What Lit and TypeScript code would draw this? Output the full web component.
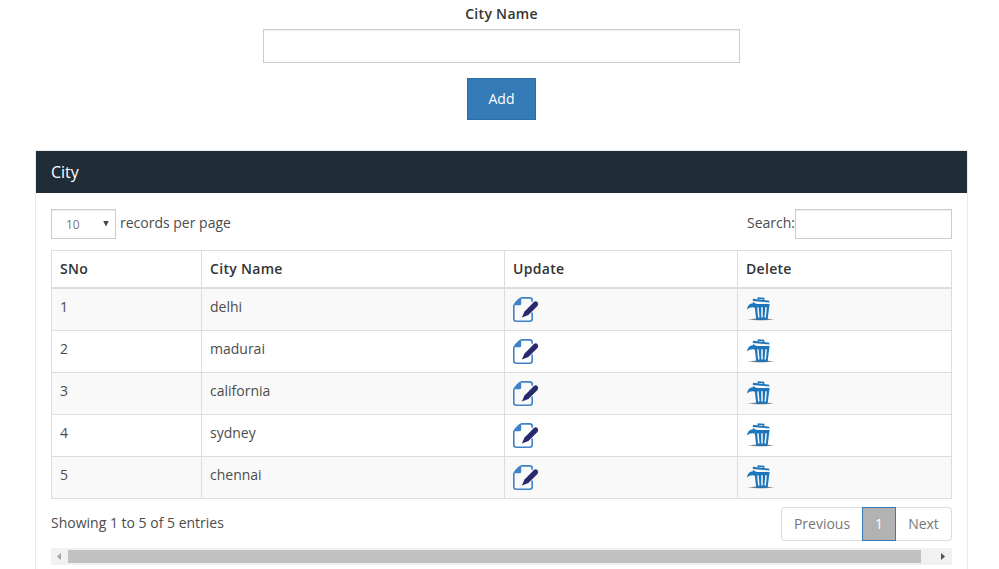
import { LitElement, html, css, svg } from "lit";
import { customElement, property } from "lit/decorators.js";

const editIcon = html`<svg width="26" height="25" viewBox="0 0 26 25">
  ${svg`<path d="M8 .9H16.8Q19.2 .9 19.2 3.3V4.7M19.2 15.5V21.8Q19.2 24.2 16.8 24.2H3.2Q.8 24.2 .8 21.8V8" fill="none" stroke="#3f83c6" stroke-width="1.6"/>
  <path d="M.2 8.3Q.6 6.6 3.6 3.5Q6.2 .7 8.2 .2V6.4Q8.2 8.3 6.2 8.3Z" fill="#3f83c6"/>
  <path d="M8.8 20.4L11.5 14.6L20.7 5.3Q22.5 3.6 24.4 5Q26 6.9 24.5 9L15.4 18L10.2 19.9Z" fill="#292a6e"/>`}
</svg>`;

const trashIcon = html`<svg width="28" height="25" viewBox="0 0 28 25">
  ${svg`<defs><radialGradient id="shade"><stop offset="0" stop-color="#555"/><stop offset=".6" stop-color="#888"/><stop offset="1" stop-color="#aaa" stop-opacity="0"/></radialGradient></defs>
  <ellipse cx="14" cy="22.4" rx="14" ry="1.4" fill="url(#shade)"/>
  <path d="M7.5 7H22.6L20.6 22.7H9.2Z" fill="#1d76bb"/>
  <path d="M10.9 10.2L11.8 20.5M15 10.2V20.5M19.1 10.2L18.2 20.5" stroke="#f9f9f9" stroke-width="1.5"/>
  <path d="M6 1.8L22.3 3.7V5.6L5.8 3.9Z" fill="#1d76bb"/>
  <path d="M11.1 2.5L11.4 1L16.6 1.4V3.2" fill="none" stroke="#1d76bb" stroke-width="1.5"/>
  <path d="M0 12.4Q.6 6.8 6 6.2L5.8 4.9L12 8.2L8.4 12.8L7.5 10.5Q3 9.6 0 12.4Z" fill="#1d76bb"/>`}
</svg>`;

@customElement("city-table")
class CityTable extends LitElement {
  @property({ attribute: false }) cities: string[] = [];

  static styles = css`
    :host { display: block; }
    .table { border: 1px solid #ddd; border-width: 1px 0 0 1px; }
    .row { display: grid; grid-template-columns: 150px 303px 233px 214px; height: 42px; }
    .row:nth-child(even) { background: #f9f9f9; }
    .head { height: 38px; font-weight: 600; letter-spacing: 0.3px; color: #333; }
    .cell { border: 1px solid #ddd; border-width: 0 1px 1px 0; padding: 8px; line-height: 20px; box-sizing: border-box; }
    .head .cell { border-bottom-width: 2px; }
    svg { display: block; }
    .trash { padding-left: 9px; }
  `;

  render() {
    return html`<div class="table">
      <div class="row head">
        ${["SNo", "City Name", "Update", "Delete"].map((t) => html`<div class="cell">${t}</div>`)}
      </div>
      ${this.cities.map((c, i) => html`<div class="row">
        <div class="cell">${i + 1}</div>
        <div class="cell">${c}</div>
        <div class="cell">${editIcon}</div>
        <div class="cell trash">${trashIcon}</div>
      </div>`)}
    </div>`;
  }
}

@customElement("app-root")
class AppRoot extends LitElement {
  static styles = css`
    :host { display: block; height: 569px; overflow: hidden; background: #fff; color: #4c4c4c; font: 14px/20px "Open Sans", sans-serif; }
    input { display: block; box-sizing: border-box; margin: 0; border: 1px solid #ccc; border-radius: 0; background: #fff; box-shadow: inset 0 1px 1px rgba(0, 0, 0, 0.075); outline: 0; }
    .form { display: flex; flex-direction: column; align-items: center; padding: 4px 0 0 4px; height: 146px; }
    .label { font-weight: 600; letter-spacing: 0.3px; color: #333; }
    .city { width: 477px; height: 34px; margin: 5px 0 15px; }
    .add { width: 69px; height: 42px; box-sizing: border-box; border: 1px solid #2e6da4; background: #337ab7; color: #fff; font: inherit; padding: 0; }
    .panel { margin: 0 31px 0 35px; border: 1px solid #e7ebee; border-bottom: 0; height: 430px; }
    .title { height: 42px; line-height: 42px; padding-left: 15px; background: #202c36; color: #fff; font-size: 16px; }
    .body { padding: 16px 15px 0; }
    .bar { display: flex; justify-content: space-between; height: 30px; margin-bottom: 11px; }
    .group { display: flex; }
    .group span { line-height: 28px; }
    .select { display: flex; align-items: center; justify-content: space-between; width: 65px; box-sizing: border-box; border: 1px solid #ccc; padding: 1px 6px 0 14px; margin-right: 4px; font-size: 12px; color: #777; box-shadow: inset 0 1px 1px rgba(0, 0, 0, 0.075); }
    .caret { width: 6px; height: 6px; margin-top: -2px; background: #444; clip-path: polygon(0 0, 100% 0, 50% 100%); }
    .search { width: 157px; height: 30px; }
    .foot { display: flex; justify-content: space-between; height: 34px; margin: 8px 0 7px; line-height: 32px; }
    .pages { display: flex; box-sizing: border-box; width: 171px; color: #777; line-height: 32px; text-align: center; }
    .page { box-sizing: border-box; border: 1px solid #ddd; }
    .prev { width: 81px; border-right: 0; border-radius: 4px 0 0 4px; }
    .current { width: 34px; border-color: #337ab7; background: #b2b2b2; color: #fff; }
    .next { width: 56px; border-left: 0; border-radius: 0 4px 4px 0; }
    .scroll { display: flex; align-items: center; height: 17px; background: #f1f1f1; }
    .thumb { width: 853px; height: 13px; background: #c1c1c1; }
    .arrow { width: 4px; height: 7px; }
    .left { margin: 0 7px 0 6px; background: #a3a3a3; clip-path: polygon(100% 0, 100% 100%, 0 50%); }
    .right { margin-left: 20px; background: #505050; clip-path: polygon(0 0, 100% 50%, 0 100%); }
  `;

  private cities = ["delhi", "madurai", "california", "sydney", "chennai"];

  render() {
    return html`
      <div class="form">
        <div class="label">City Name</div>
        <input class="city" aria-label="City Name" />
        <button class="add">Add</button>
      </div>
      <div class="panel">
        <div class="title">City</div>
        <div class="body">
          <div class="bar">
            <div class="group"><div class="select">10<i class="caret"></i></div><span>records per page</span></div>
            <div class="group"><span>Search:</span><input class="search" aria-label="Search" /></div>
          </div>
          <city-table .cities=${this.cities}></city-table>
          <div class="foot">
            <div>Showing 1 to 5 of 5 entries</div>
            <div class="pages">
              <div class="page prev">Previous</div>
              <div class="page current">1</div>
              <div class="page next">Next</div>
            </div>
          </div>
          <div class="scroll"><i class="arrow left"></i><i class="thumb"></i><i class="arrow right"></i></div>
        </div>
      </div>
    `;
  }
}
